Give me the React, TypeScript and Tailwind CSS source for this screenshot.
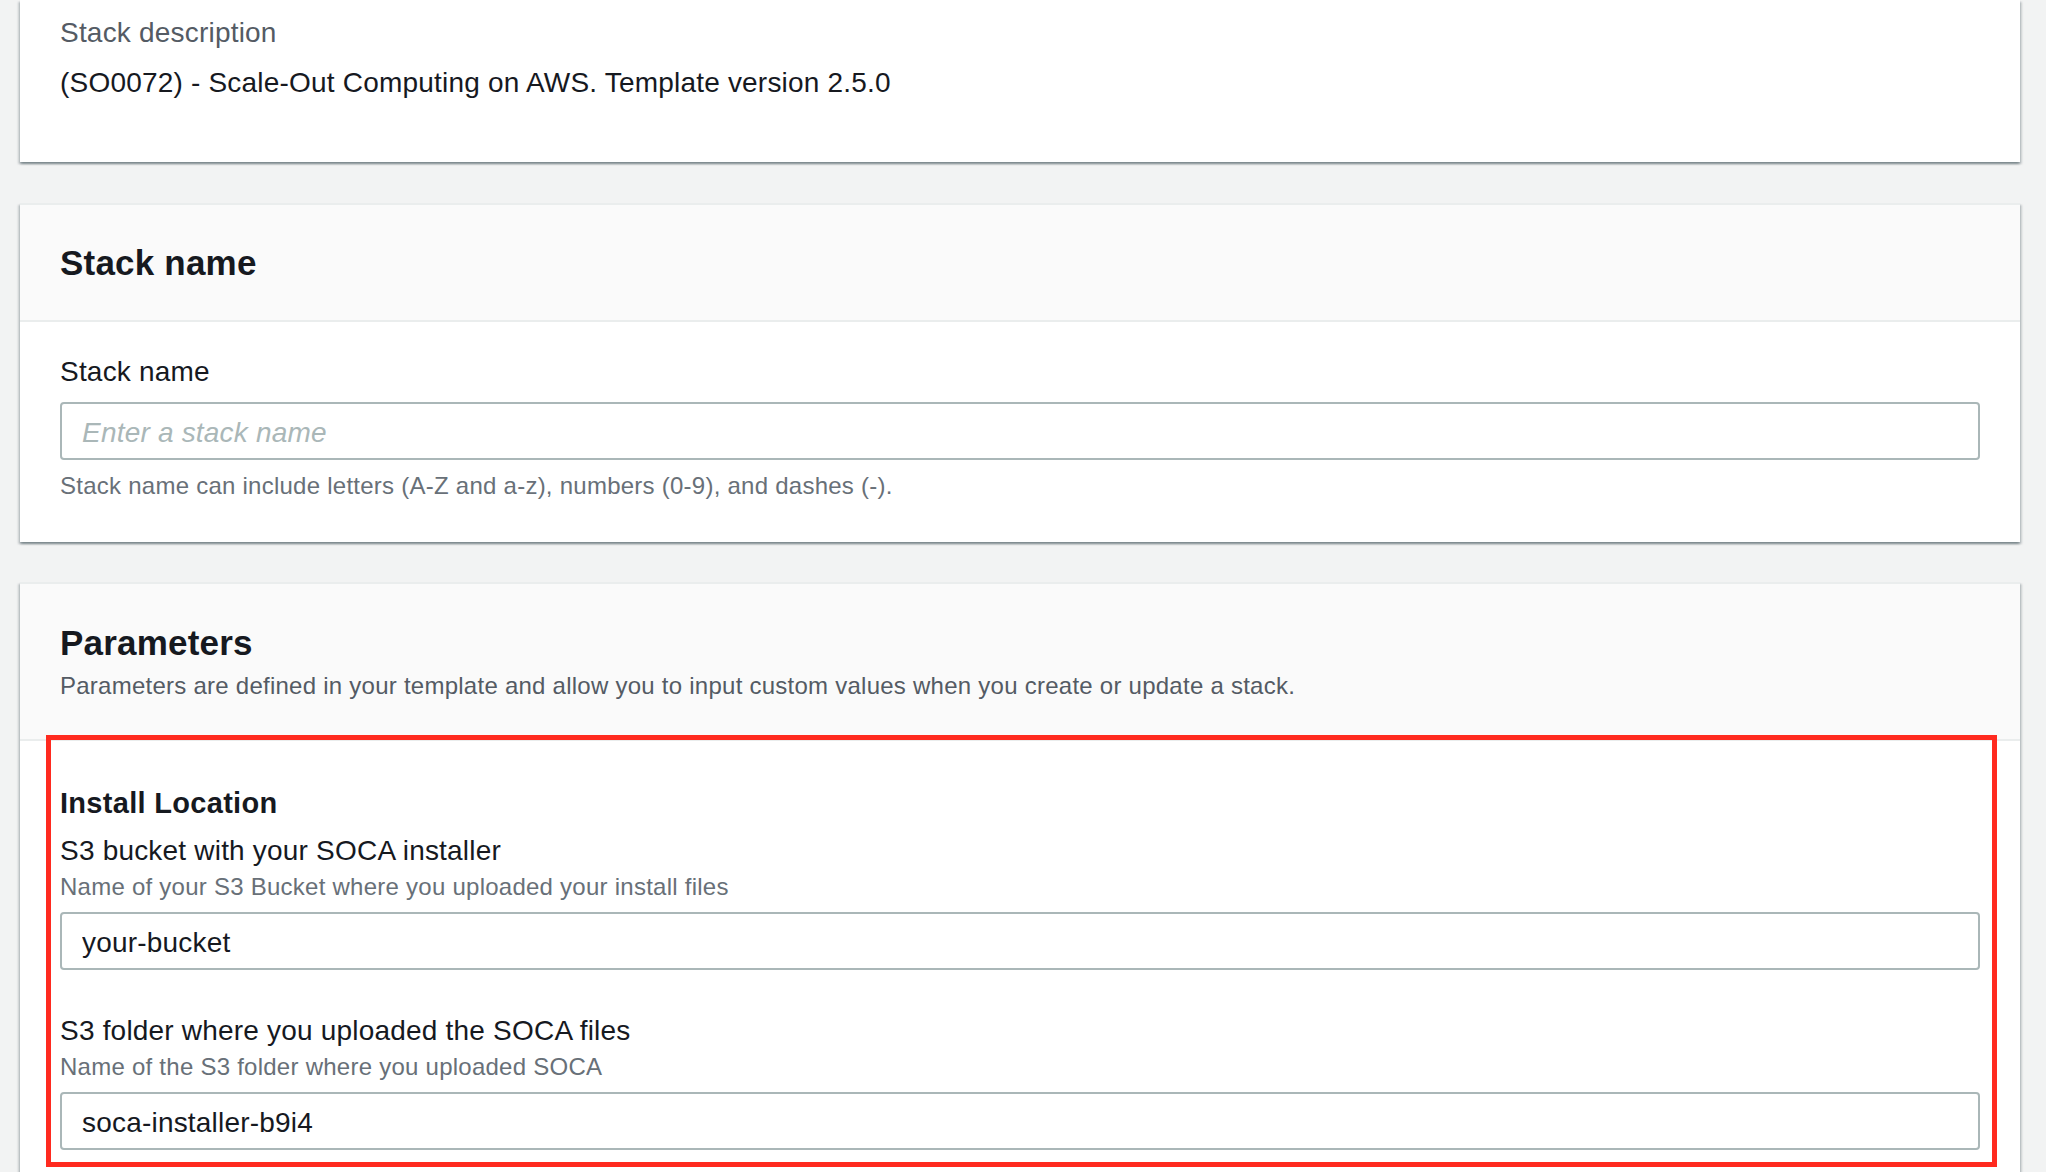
import React from 'react';

const cardShadow =
  'shadow-[0_2px_2px_0_rgba(0,28,36,0.3),2px_2px_2px_0_rgba(0,28,36,0.15),-2px_2px_2px_0_rgba(0,28,36,0.15)]';

const Field = ({ label, hint, value, className = '' }: any) => (
  <div className={className}>
    <div className="text-[28px] leading-[36px] tracking-[0.2px] text-[#16191f]">{label}</div>
    <div className="mt-[2px] text-[24px] leading-[32px] tracking-[0.25px] text-[#687078]">{hint}</div>
    <input
      readOnly
      defaultValue={value}
      className="mt-[9px] block h-[58px] w-full rounded-[4px] border-2 border-[#aab7b8] bg-white px-[20px] pt-[12px] pb-[8px] text-[28px] leading-[36px] tracking-[0.2px] text-[#16191f] outline-none"
    />
  </div>
);

export default function App() {
  return (
    <div className="h-screen overflow-hidden bg-[#f2f3f3] pl-[20px] pr-[26px] font-['Liberation_Sans',Arial,sans-serif]">
      <div className="flex flex-col">
        {/* Stack description (top cut off) */}
        <div className={`bg-white px-[40px] pt-[15px] pb-[61px] ${cardShadow}`}>
          <div className="text-[28px] leading-[36px] tracking-[0.2px] text-[#545b64]">Stack description</div>
          <div className="mt-[14px] text-[28px] leading-[36px] tracking-[0.2px] text-[#16191f]">
            (SO0072) - Scale-Out Computing on AWS. Template version 2.5.0
          </div>
        </div>

        {/* Stack name */}
        <div className={`mt-[41px] border-t-2 border-[#eaeded] bg-white ${cardShadow}`}>
          <div className="border-b-2 border-[#eaeded] bg-[#fafafa] px-[40px] pt-[36px] pb-[35px]">
            <h2 className="text-[35px] leading-[44px] font-bold tracking-[0.2px] text-[#16191f]">Stack name</h2>
          </div>
          <div className="px-[40px] pt-[32px] pb-[40px]">
            <div className="text-[28px] leading-[36px] tracking-[0.2px] text-[#16191f]">Stack name</div>
            <input
              placeholder="Enter a stack name"
              className="mt-[12px] block h-[58px] w-full rounded-[4px] border-2 border-[#aab7b8] bg-white px-[20px] pt-[12px] pb-[8px] text-[28px] leading-[36px] tracking-[0.2px] text-[#16191f] outline-none placeholder:italic placeholder:text-[#aab7b8]"
            />
            <div className="mt-[10px] text-[24px] leading-[32px] tracking-[0.25px] text-[#687078]">
              Stack name can include letters (A-Z and a-z), numbers (0-9), and dashes (-).
            </div>
          </div>
        </div>

        {/* Parameters */}
        <div className={`relative mt-[40px] border-t-2 border-[#eaeded] bg-white ${cardShadow}`}>
          <div className="border-b-2 border-[#eaeded] bg-[#fafafa] px-[40px] pt-[37px] pb-[37px]">
            <h2 className="text-[35px] leading-[44px] font-bold tracking-[0.2px] text-[#16191f]">Parameters</h2>
            <p className="mt-[5px] text-[24px] leading-[32px] tracking-[0.25px] text-[#545b64]">
              Parameters are defined in your template and allow you to input custom values when you create or update a stack.
            </p>
          </div>
          <div className="px-[40px] pt-[44px] pb-[80px]">
            <h3 className="text-[29px] leading-[36px] font-bold tracking-[0.3px] text-[#16191f]">Install Location</h3>
            <Field
              className="mt-[12px]"
              label="S3 bucket with your SOCA installer"
              hint="Name of your S3 Bucket where you uploaded your install files"
              value="your-bucket"
            />
            <Field
              className="mt-[43px]"
              label="S3 folder where you uploaded the SOCA files"
              hint="Name of the S3 folder where you uploaded SOCA"
              value="soca-installer-b9i4"
            />
          </div>

          {/* red highlight annotation */}
          <div className="pointer-events-none absolute left-[26px] top-[151px] h-[432px] w-[1951px] border-[5px] border-[#ff2a1f]" />
        </div>
      </div>
    </div>
  );
}
